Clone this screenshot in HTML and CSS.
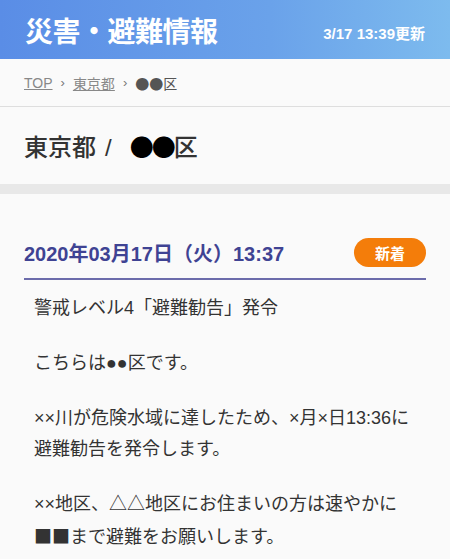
FILE: index.html
```html
<!DOCTYPE html>
<html lang="ja">
<head>
  <meta charset="UTF-8">
  <meta name="viewport" content="width=device-width, initial-scale=1.0">
  <title>災害・避難情報</title>
  <link rel="stylesheet" href="styles.css">
</head>
<body>
  <!-- ヘッダー -->
  <header class="header">
    <h1 class="header-title">災害・避難情報</h1>
    <div class="header-updated">3/17 13:39更新</div>
  </header>

  <!-- パンくず -->
  <nav class="breadcrumb">
    <a href="#">TOP</a>
    <span class="breadcrumb-sep">›</span>
    <a href="#">東京都</a>
    <span class="breadcrumb-sep">›</span>
    <span class="breadcrumb-current"><span class="dots">●●</span>区</span>
  </nav>

  <!-- 地域名 -->
  <section class="area-title">
    <h2>東京都<span class="area-sep">/</span><span class="dots">●●</span>区</h2>
  </section>

  <div class="band"></div>

  <!-- お知らせ -->
  <section class="notice">
    <div class="notice-head">
      <div class="notice-date">2020年03月17日（火）13:37</div>
      <span class="badge">新着</span>
    </div>
    <div class="notice-body">
      <p>警戒レベル4「避難勧告」発令</p>
      <p>こちらは●●区です。</p>
      <p>××川が危険水域に達したため、×月×日13:36に<br>避難勧告を発令します。</p>
      <p>××地区、△△地区にお住まいの方は速やかに<br><span class="cjk">■■</span>まで避難をお願いします。</p>
    </div>
  </section>
</body>
</html>
```

FILE: styles.css
```css
/* ベース */
body {
  margin: 0;
  background-color: #fafafa;
  color: #333;
  font-family: "Liberation Sans", "Noto Sans CJK JP", sans-serif;
}

/* ヘッダー */
.header {
  height: 59px;
  padding: 0 25px;
  display: flex;
  justify-content: space-between;
  align-items: center;
  background: linear-gradient(90deg, #5a8de6 0%, #6aa2ea 60%, #7dbbee 100%);
  color: #fff;
}

.header-title {
  margin: 0;
  font-size: 28px;
  font-weight: bold;
  letter-spacing: -0.5px;
}

.header-updated {
  font-size: 15px;
  font-weight: bold;
  padding-top: 5px;
}

/* パンくず */
.breadcrumb {
  height: 47px;
  padding: 0 24px;
  display: flex;
  align-items: center;
  border-bottom: 1px solid #dedede;
  font-size: 14px;
  color: #888;
}

.breadcrumb a {
  color: #888;
}

.breadcrumb-sep {
  margin: 0 8px;
  font-size: 13px;
  color: #777;
}

.breadcrumb-current {
  color: #555;
}

.breadcrumb-current .dots {
  font-family: "Noto Sans CJK JP", sans-serif;
}

/* 地域名 */
.area-title {
  height: 77px;
  padding: 0 24px;
  display: flex;
  align-items: center;
}

.area-title h2 {
  margin: 0;
  font-size: 24px;
  font-weight: 500;
  color: #333;
}

.area-sep {
  margin: 0 18px 0 9px;
}

.area-title .dots {
  font-family: "Noto Sans CJK JP", sans-serif;
  color: #000;
  letter-spacing: -2px;
}

.band {
  height: 10px;
  background-color: #e8e8e8;
}

/* お知らせ */
.notice {
  padding: 44px 24px 0;
}

.notice-head {
  display: flex;
  justify-content: space-between;
  align-items: center;
  padding-bottom: 11px;
  border-bottom: 2px solid #6c6cab;
}

.notice-date {
  font-size: 20px;
  font-weight: bold;
  color: #3f4393;
}

.badge {
  width: 72px;
  height: 29px;
  border-radius: 15px;
  background-color: #f47d0a;
  color: #fff;
  font-size: 15px;
  font-weight: bold;
  display: flex;
  justify-content: center;
  align-items: center;
}

.notice-body {
  padding: 13px 10px 0;
  font-size: 18px;
  line-height: 31px;
}

.notice-body p {
  margin: 0 0 24px;
}

.cjk {
  font-family: "Noto Sans CJK JP", sans-serif;
}
```
